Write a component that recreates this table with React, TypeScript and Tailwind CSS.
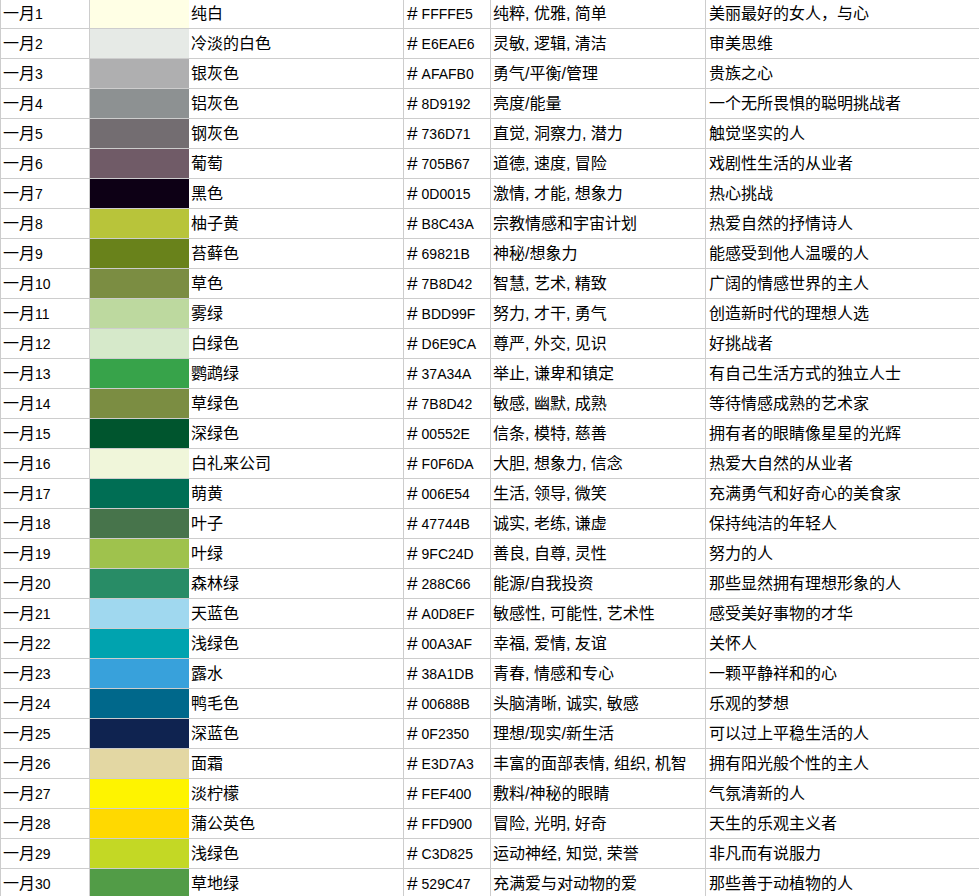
import React from 'react';

type ColorRow = {
  name: string;
  hex: string;
  traits: string;
  person: string;
};

const rows: ColorRow[] = [
  { name: '纯白', hex: 'FFFFE5', traits: '纯粹, 优雅, 简单', person: '美丽最好的女人，与心' },
  { name: '冷淡的白色', hex: 'E6EAE6', traits: '灵敏, 逻辑, 清洁', person: '审美思维' },
  { name: '银灰色', hex: 'AFAFB0', traits: '勇气/平衡/管理', person: '贵族之心' },
  { name: '铝灰色', hex: '8D9192', traits: '亮度/能量', person: '一个无所畏惧的聪明挑战者' },
  { name: '钢灰色', hex: '736D71', traits: '直觉, 洞察力, 潜力', person: '触觉坚实的人' },
  { name: '葡萄', hex: '705B67', traits: '道德, 速度, 冒险', person: '戏剧性生活的从业者' },
  { name: '黑色', hex: '0D0015', traits: '激情, 才能, 想象力', person: '热心挑战' },
  { name: '柚子黄', hex: 'B8C43A', traits: '宗教情感和宇宙计划', person: '热爱自然的抒情诗人' },
  { name: '苔藓色', hex: '69821B', traits: '神秘/想象力', person: '能感受到他人温暖的人' },
  { name: '草色', hex: '7B8D42', traits: '智慧, 艺术, 精致', person: '广阔的情感世界的主人' },
  { name: '雾绿', hex: 'BDD99F', traits: '努力, 才干, 勇气', person: '创造新时代的理想人选' },
  { name: '白绿色', hex: 'D6E9CA', traits: '尊严, 外交, 见识', person: '好挑战者' },
  { name: '鹦鹉绿', hex: '37A34A', traits: '举止, 谦卑和镇定', person: '有自己生活方式的独立人士' },
  { name: '草绿色', hex: '7B8D42', traits: '敏感, 幽默, 成熟', person: '等待情感成熟的艺术家' },
  { name: '深绿色', hex: '00552E', traits: '信条, 模特, 慈善', person: '拥有者的眼睛像星星的光辉' },
  { name: '白礼来公司', hex: 'F0F6DA', traits: '大胆, 想象力, 信念', person: '热爱大自然的从业者' },
  { name: '萌黄', hex: '006E54', traits: '生活, 领导, 微笑', person: '充满勇气和好奇心的美食家' },
  { name: '叶子', hex: '47744B', traits: '诚实, 老练, 谦虚', person: '保持纯洁的年轻人' },
  { name: '叶绿', hex: '9FC24D', traits: '善良, 自尊, 灵性', person: '努力的人' },
  { name: '森林绿', hex: '288C66', traits: '能源/自我投资', person: '那些显然拥有理想形象的人' },
  { name: '天蓝色', hex: 'A0D8EF', traits: '敏感性, 可能性, 艺术性', person: '感受美好事物的才华' },
  { name: '浅绿色', hex: '00A3AF', traits: '幸福, 爱情, 友谊', person: '关怀人' },
  { name: '露水', hex: '38A1DB', traits: '青春, 情感和专心', person: '一颗平静祥和的心' },
  { name: '鸭毛色', hex: '00688B', traits: '头脑清晰, 诚实, 敏感', person: '乐观的梦想' },
  { name: '深蓝色', hex: '0F2350', traits: '理想/现实/新生活', person: '可以过上平稳生活的人' },
  { name: '面霜', hex: 'E3D7A3', traits: '丰富的面部表情, 组织, 机智', person: '拥有阳光般个性的主人' },
  { name: '淡柠檬', hex: 'FEF400', traits: '敷料/神秘的眼睛', person: '气氛清新的人' },
  { name: '蒲公英色', hex: 'FFD900', traits: '冒险, 光明, 好奇', person: '天生的乐观主义者' },
  { name: '浅绿色', hex: 'C3D825', traits: '运动神经, 知觉, 荣誉', person: '非凡而有说服力' },
  { name: '草地绿', hex: '529C47', traits: '充满爱与对动物的爱', person: '那些善于动植物的人' },
];

const Latin = ({ children }: { children: React.ReactNode }) => (
  <span className="text-[14px] font-['Liberation_Sans',sans-serif]">{children}</span>
);

const cell = 'shrink-0 flex items-center border-r border-[#cdcdcd] whitespace-nowrap overflow-hidden';

const App = () => {
  return (
    <div className="w-[979px] h-[896px] overflow-hidden bg-white text-black text-[16px] font-['Liberation_Sans','Noto_Sans_CJK_SC',sans-serif]">
      <div className="-mt-px">
        {rows.map((row, i) => (
          <div key={i} className="flex h-[30px] border-b border-[#cdcdcd]">
            <div className={`${cell} w-[90px] pl-[2px] border-l`}>
              <span>
                一月<Latin>{i + 1}</Latin>
              </span>
            </div>
            <div className="w-[99px] shrink-0" style={{ backgroundColor: `#${row.hex}` }} />
            <div className={`${cell} w-[215px] pl-[2px]`}>
              <span>{row.name}</span>
            </div>
            <div className={`${cell} w-[87px] pl-[3px]`}>
              <span className="flex items-center">
                <span className="text-[19px] leading-none font-['Liberation_Sans',sans-serif]">#</span>
                <span className="ml-[4px]">
                  <Latin>{row.hex}</Latin>
                </span>
              </span>
            </div>
            <div className={`${cell} w-[215px] pl-[2px]`}>
              <span>{row.traits}</span>
            </div>
            <div className="flex-1 flex items-center pl-[3px] whitespace-nowrap overflow-hidden">
              <span>{row.person}</span>
            </div>
          </div>
        ))}
      </div>
    </div>
  );
};

export default App;
